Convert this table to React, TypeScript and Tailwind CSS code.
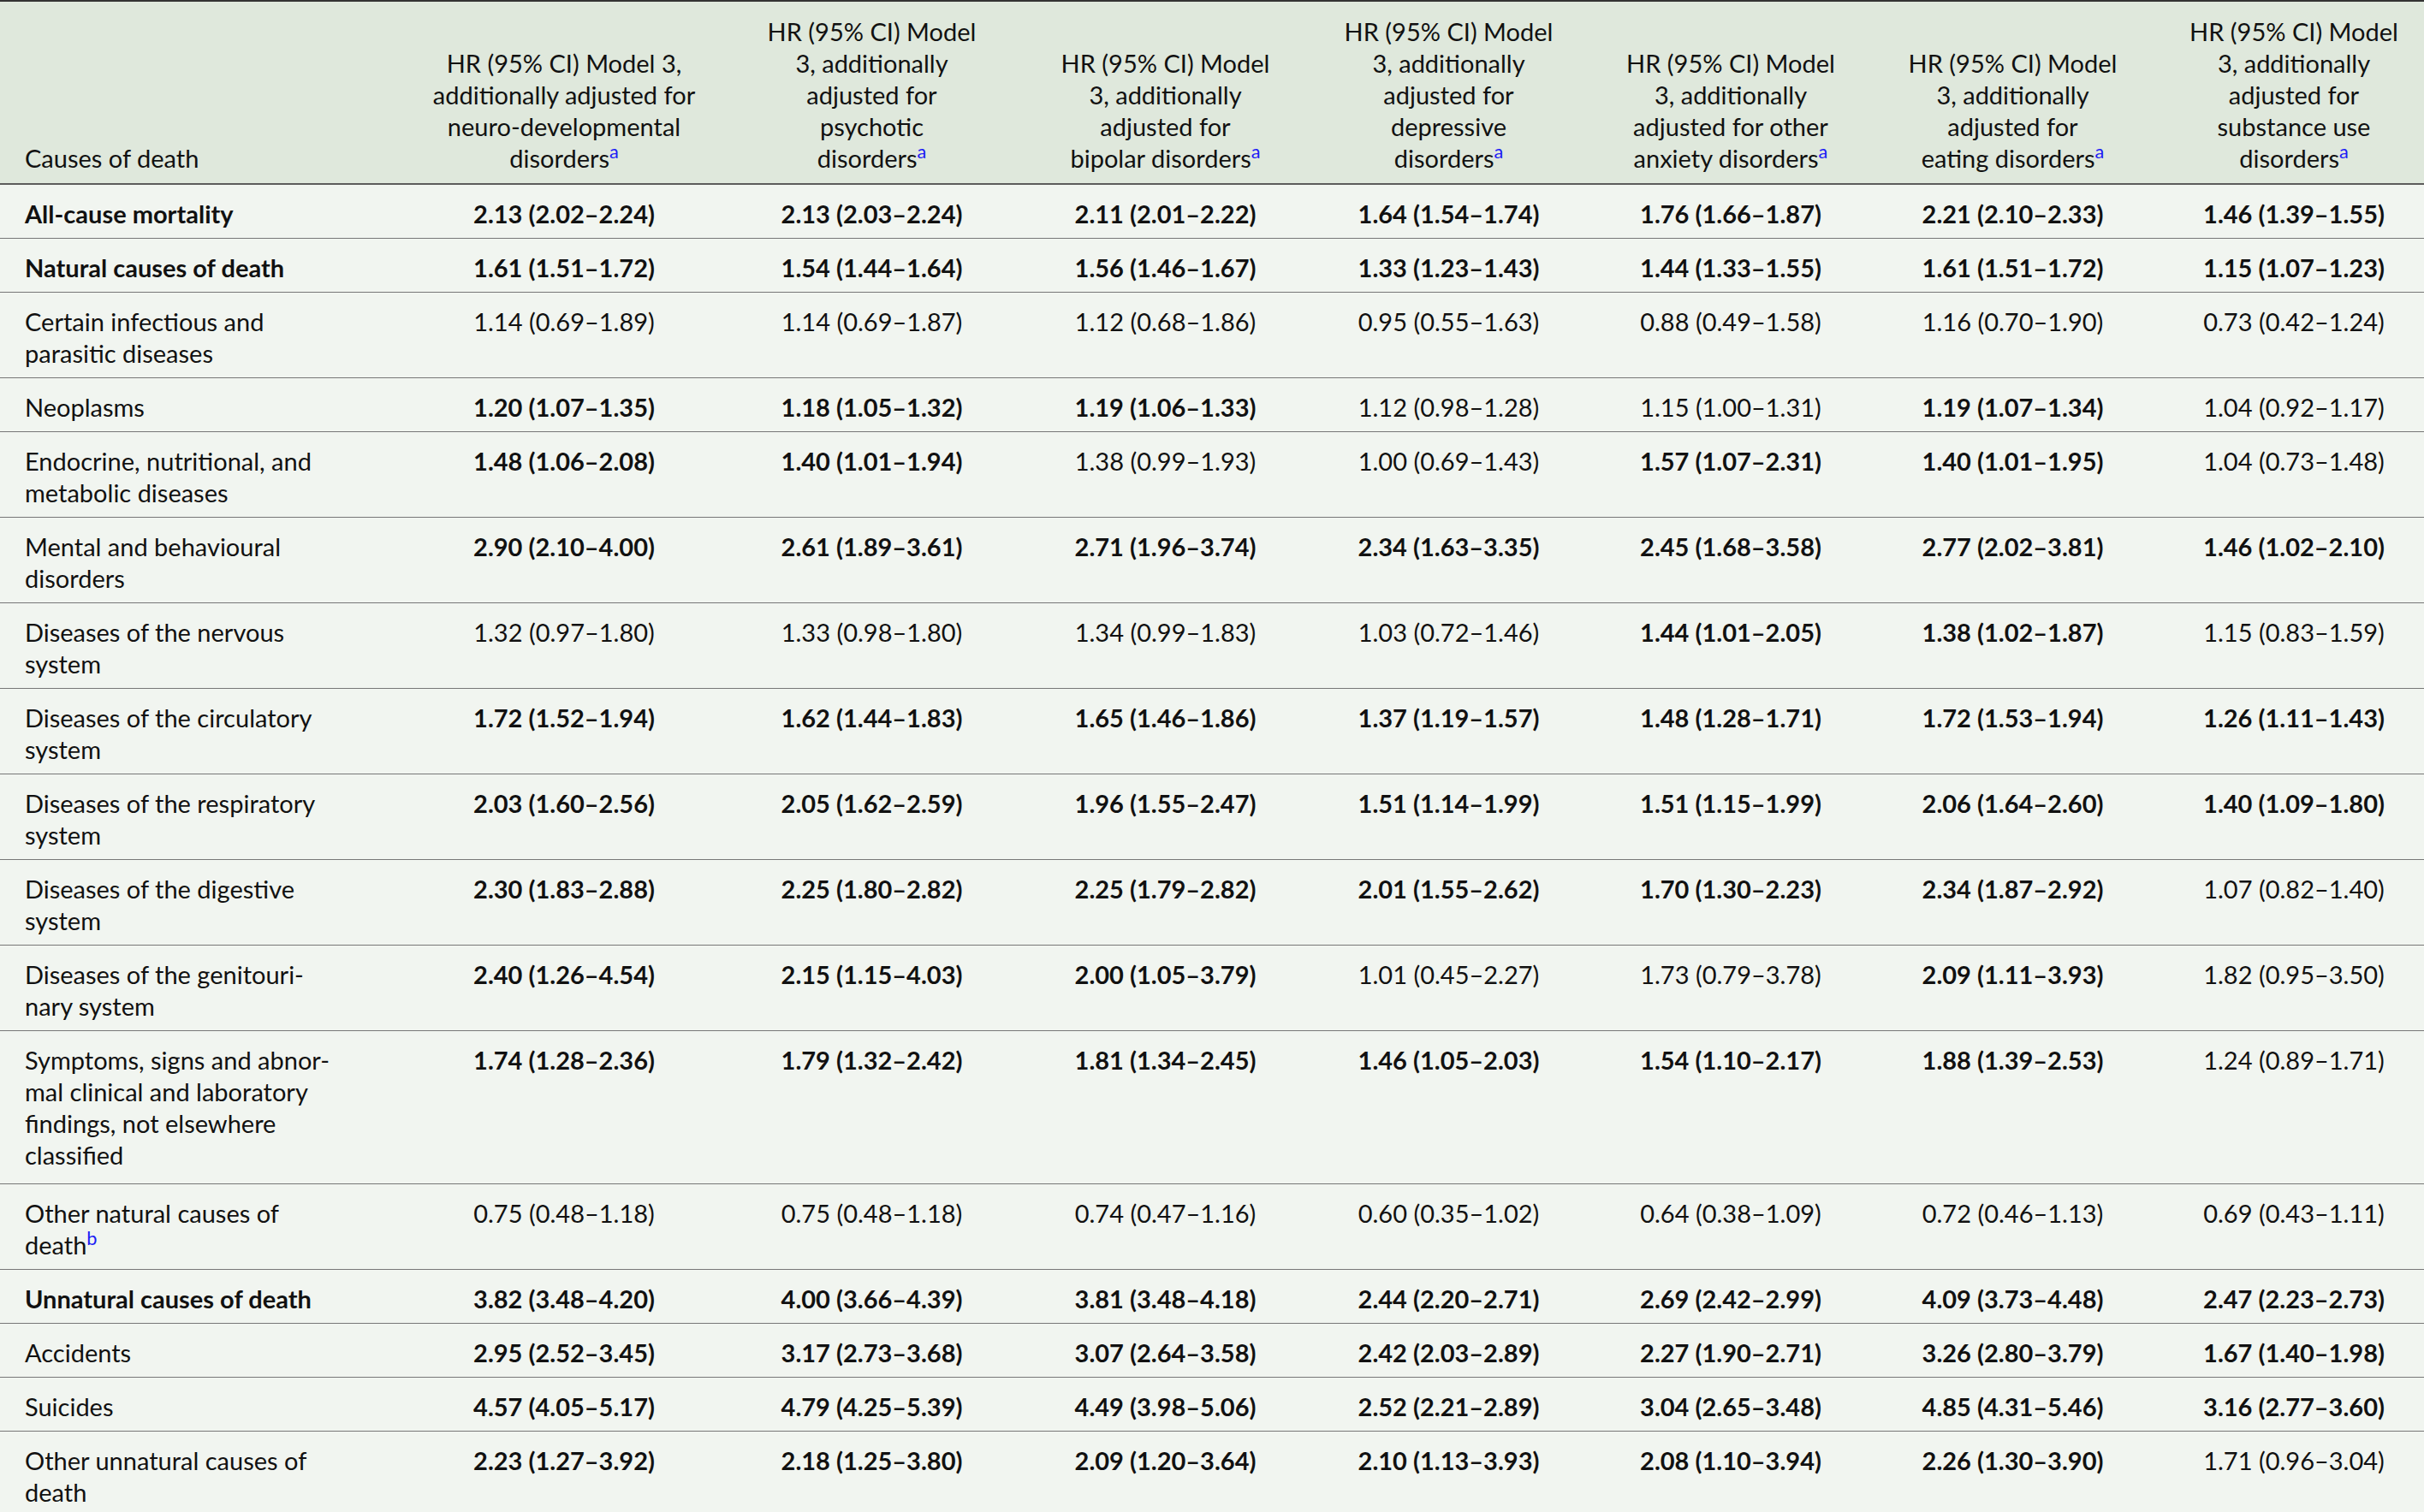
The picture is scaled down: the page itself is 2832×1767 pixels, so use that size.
import React from 'react'

// One table row: the label lines in the first column, then seven HR cells
interface Row {
  label: string[];
  bold?: boolean;
  tall?: boolean;
  note?: string;
  values: [string, boolean][];
}

// Header columns, already broken into the lines of the printed table
const headers: string[][] = [
  ['HR (95% CI) Model 3,', 'additionally adjusted for', 'neuro-developmental', 'disorders'],
  ['HR (95% CI) Model', '3, additionally', 'adjusted for', 'psychotic', 'disorders'],
  ['HR (95% CI) Model', '3, additionally', 'adjusted for', 'bipolar disorders'],
  ['HR (95% CI) Model', '3, additionally', 'adjusted for', 'depressive', 'disorders'],
  ['HR (95% CI) Model', '3, additionally', 'adjusted for other', 'anxiety disorders'],
  ['HR (95% CI) Model', '3, additionally', 'adjusted for', 'eating disorders'],
  ['HR (95% CI) Model', '3, additionally', 'adjusted for', 'substance use', 'disorders'],
]

const B = true
const R = false

const rows: Row[] = [
  {
    label: ['All-cause mortality'], bold: true,
    values: [['2.13 (2.02–2.24)', B], ['2.13 (2.03–2.24)', B], ['2.11 (2.01–2.22)', B], ['1.64 (1.54–1.74)', B], ['1.76 (1.66–1.87)', B], ['2.21 (2.10–2.33)', B], ['1.46 (1.39–1.55)', B]],
  },
  {
    label: ['Natural causes of death'], bold: true,
    values: [['1.61 (1.51–1.72)', B], ['1.54 (1.44–1.64)', B], ['1.56 (1.46–1.67)', B], ['1.33 (1.23–1.43)', B], ['1.44 (1.33–1.55)', B], ['1.61 (1.51–1.72)', B], ['1.15 (1.07–1.23)', B]],
  },
  {
    label: ['Certain infectious and', 'parasitic diseases'],
    values: [['1.14 (0.69–1.89)', R], ['1.14 (0.69–1.87)', R], ['1.12 (0.68–1.86)', R], ['0.95 (0.55–1.63)', R], ['0.88 (0.49–1.58)', R], ['1.16 (0.70–1.90)', R], ['0.73 (0.42–1.24)', R]],
  },
  {
    label: ['Neoplasms'],
    values: [['1.20 (1.07–1.35)', B], ['1.18 (1.05–1.32)', B], ['1.19 (1.06–1.33)', B], ['1.12 (0.98–1.28)', R], ['1.15 (1.00–1.31)', R], ['1.19 (1.07–1.34)', B], ['1.04 (0.92–1.17)', R]],
  },
  {
    label: ['Endocrine, nutritional, and', 'metabolic diseases'],
    values: [['1.48 (1.06–2.08)', B], ['1.40 (1.01–1.94)', B], ['1.38 (0.99–1.93)', R], ['1.00 (0.69–1.43)', R], ['1.57 (1.07–2.31)', B], ['1.40 (1.01–1.95)', B], ['1.04 (0.73–1.48)', R]],
  },
  {
    label: ['Mental and behavioural', 'disorders'],
    values: [['2.90 (2.10–4.00)', B], ['2.61 (1.89–3.61)', B], ['2.71 (1.96–3.74)', B], ['2.34 (1.63–3.35)', B], ['2.45 (1.68–3.58)', B], ['2.77 (2.02–3.81)', B], ['1.46 (1.02–2.10)', B]],
  },
  {
    label: ['Diseases of the nervous', 'system'],
    values: [['1.32 (0.97–1.80)', R], ['1.33 (0.98–1.80)', R], ['1.34 (0.99–1.83)', R], ['1.03 (0.72–1.46)', R], ['1.44 (1.01–2.05)', B], ['1.38 (1.02–1.87)', B], ['1.15 (0.83–1.59)', R]],
  },
  {
    label: ['Diseases of the circulatory', 'system'],
    values: [['1.72 (1.52–1.94)', B], ['1.62 (1.44–1.83)', B], ['1.65 (1.46–1.86)', B], ['1.37 (1.19–1.57)', B], ['1.48 (1.28–1.71)', B], ['1.72 (1.53–1.94)', B], ['1.26 (1.11–1.43)', B]],
  },
  {
    label: ['Diseases of the respiratory', 'system'],
    values: [['2.03 (1.60–2.56)', B], ['2.05 (1.62–2.59)', B], ['1.96 (1.55–2.47)', B], ['1.51 (1.14–1.99)', B], ['1.51 (1.15–1.99)', B], ['2.06 (1.64–2.60)', B], ['1.40 (1.09–1.80)', B]],
  },
  {
    label: ['Diseases of the digestive', 'system'],
    values: [['2.30 (1.83–2.88)', B], ['2.25 (1.80–2.82)', B], ['2.25 (1.79–2.82)', B], ['2.01 (1.55–2.62)', B], ['1.70 (1.30–2.23)', B], ['2.34 (1.87–2.92)', B], ['1.07 (0.82–1.40)', R]],
  },
  {
    label: ['Diseases of the genitouri-', 'nary system'],
    values: [['2.40 (1.26–4.54)', B], ['2.15 (1.15–4.03)', B], ['2.00 (1.05–3.79)', B], ['1.01 (0.45–2.27)', R], ['1.73 (0.79–3.78)', R], ['2.09 (1.11–3.93)', B], ['1.82 (0.95–3.50)', R]],
  },
  {
    label: ['Symptoms, signs and abnor-', 'mal clinical and laboratory', 'findings, not elsewhere', 'classified'],
    tall: true,
    values: [['1.74 (1.28–2.36)', B], ['1.79 (1.32–2.42)', B], ['1.81 (1.34–2.45)', B], ['1.46 (1.05–2.03)', B], ['1.54 (1.10–2.17)', B], ['1.88 (1.39–2.53)', B], ['1.24 (0.89–1.71)', R]],
  },
  {
    label: ['Other natural causes of', 'death'], note: 'b',
    values: [['0.75 (0.48–1.18)', R], ['0.75 (0.48–1.18)', R], ['0.74 (0.47–1.16)', R], ['0.60 (0.35–1.02)', R], ['0.64 (0.38–1.09)', R], ['0.72 (0.46–1.13)', R], ['0.69 (0.43–1.11)', R]],
  },
  {
    label: ['Unnatural causes of death'], bold: true,
    values: [['3.82 (3.48–4.20)', B], ['4.00 (3.66–4.39)', B], ['3.81 (3.48–4.18)', B], ['2.44 (2.20–2.71)', B], ['2.69 (2.42–2.99)', B], ['4.09 (3.73–4.48)', B], ['2.47 (2.23–2.73)', B]],
  },
  {
    label: ['Accidents'],
    values: [['2.95 (2.52–3.45)', B], ['3.17 (2.73–3.68)', B], ['3.07 (2.64–3.58)', B], ['2.42 (2.03–2.89)', B], ['2.27 (1.90–2.71)', B], ['3.26 (2.80–3.79)', B], ['1.67 (1.40–1.98)', B]],
  },
  {
    label: ['Suicides'],
    values: [['4.57 (4.05–5.17)', B], ['4.79 (4.25–5.39)', B], ['4.49 (3.98–5.06)', B], ['2.52 (2.21–2.89)', B], ['3.04 (2.65–3.48)', B], ['4.85 (4.31–5.46)', B], ['3.16 (2.77–3.60)', B]],
  },
  {
    label: ['Other unnatural causes of', 'death'],
    values: [['2.23 (1.27–3.92)', B], ['2.18 (1.25–3.80)', B], ['2.09 (1.20–3.64)', B], ['2.10 (1.13–3.93)', B], ['2.08 (1.10–3.94)', B], ['2.26 (1.30–3.90)', B], ['1.71 (0.96–3.04)', R]],
  },
]

// Footnote marker, blue and raised
const Note = ({ mark }: { mark: string }) => (
  <sup className="text-[#1c1cf5] font-normal">{mark}</sup>
)

export default function App() {
  return (
    <div className="w-[2832px] bg-white font-['Lato','Liberation_Sans',sans-serif] text-[29px] leading-[37px] text-[#111]">
      <table className="w-[2832px] table-fixed border-collapse">
        <colgroup>
          <col className="w-[476px]" />
          <col className="w-[366px]" />
          <col className="w-[353px]" />
          <col className="w-[333px]" />
          <col className="w-[329px]" />
          <col className="w-[330px]" />
          <col className="w-[329px]" />
          <col className="w-[316px]" />
        </colgroup>

        {/* Header */}
        <thead>
          <tr className="bg-[#dfe8dc] border-t-2 border-t-[#333] border-b-2 border-b-[#5c5c5c]">
            <th className="pl-[29px] pt-[16px] pb-[11px] text-left align-bottom font-normal">
              Causes of death
            </th>
            {headers.map((lines, i) => (
              <th
                key={i}
                className={`pt-[16px] pb-[11px] text-center align-bottom font-normal ${i === 6 ? 'pl-[16px] pr-1' : 'px-1'}`}
              >
                {lines.map((line, j) => (
                  <div key={j} className="whitespace-nowrap">
                    {line}
                    {j === lines.length - 1 && <Note mark="a" />}
                  </div>
                ))}
              </th>
            ))}
          </tr>
        </thead>

        {/* Body */}
        <tbody className="bg-[#f1f5f0]">
          {rows.map((row, i) => (
            <tr
              key={i}
              className={
                i === rows.length - 1
                  ? 'border-b-2 border-b-[#333]'
                  : 'border-b border-b-[#777]'
              }
            >
              <td
                className={`pl-[29px] pr-2 pt-[15px] align-top ${row.tall ? 'pb-[15px]' : 'pb-[10px]'} ${row.bold ? 'font-bold' : ''}`}
              >
                {row.label.map((line, j) => (
                  <div key={j} className="whitespace-nowrap">
                    {line}
                    {row.note && j === row.label.length - 1 && <Note mark={row.note} />}
                  </div>
                ))}
              </td>
              {row.values.map(([value, bold], j) => (
                <td
                  key={j}
                  className={`pt-[15px] pb-[10px] text-center align-top whitespace-nowrap ${j === 6 ? 'pl-[16px] pr-1' : 'px-1'} ${bold ? 'font-bold' : ''}`}
                >
                  {value}
                </td>
              ))}
            </tr>
          ))}
        </tbody>
      </table>
    </div>
  )
}
